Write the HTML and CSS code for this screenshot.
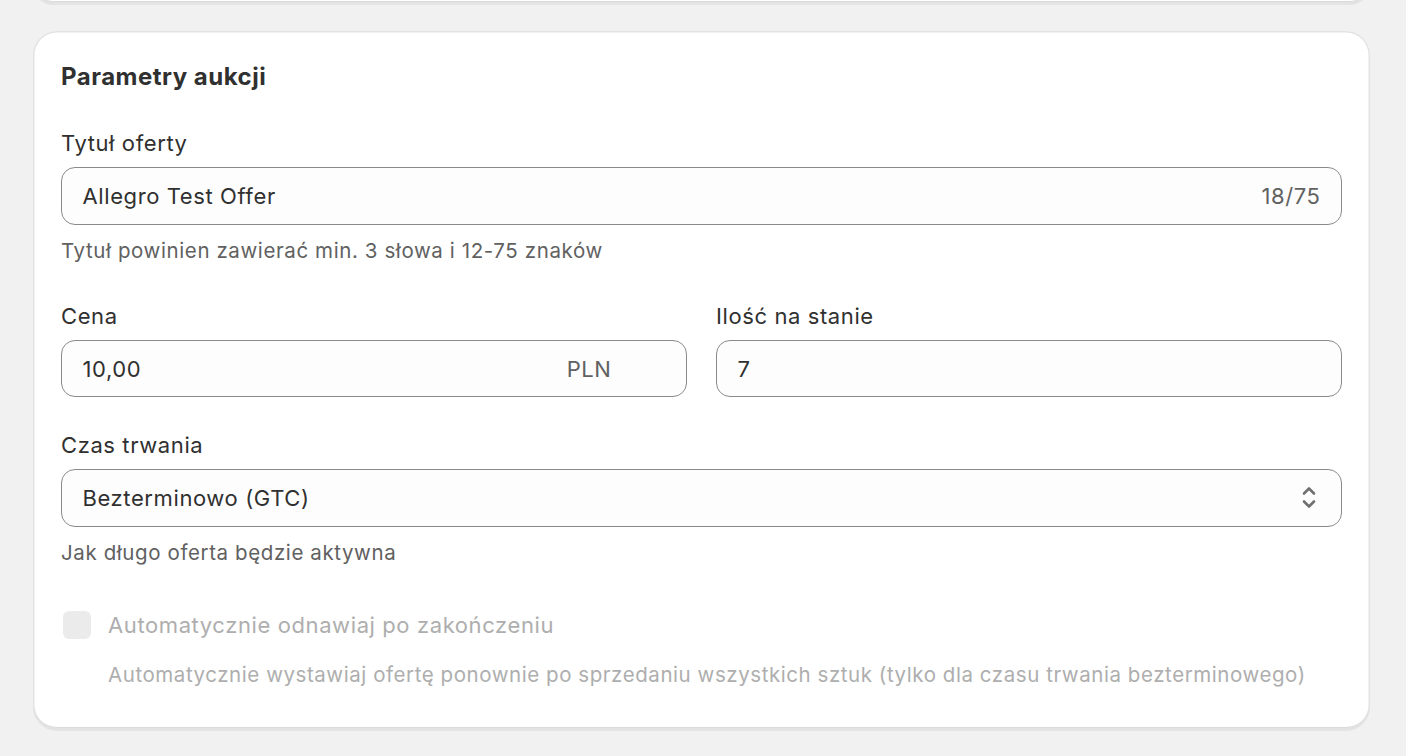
FILE: index.html
```html
<!DOCTYPE html>
<html lang="pl">
<head>
<meta charset="utf-8">
<title>Parametry aukcji</title>
<link rel="stylesheet" href="styles.css">
</head>
<body>
<div class="page">
  <div class="card card-prev"></div>
  <section class="card">
    <h2 class="card-title">Parametry aukcji</h2>

    <div class="field field-first">
      <label class="label">Tytuł oferty</label>
      <div class="input">
        <span class="value">Allegro Test Offer</span>
        <span class="counter">18/75</span>
      </div>
      <p class="help">Tytuł powinien zawierać min. 3 słowa i 12-75 znaków</p>
    </div>

    <div class="row">
      <div class="field">
        <label class="label">Cena</label>
        <div class="input">
          <span class="value">10,00</span>
          <span class="suffix">PLN</span>
        </div>
      </div>
      <div class="field">
        <label class="label">Ilość na stanie</label>
        <div class="input">
          <span class="value">7</span>
        </div>
      </div>
    </div>

    <div class="field field-select">
      <label class="label">Czas trwania</label>
      <div class="input select">
        <span class="value">Bezterminowo (GTC)</span>
        <svg class="select-icon" width="16" height="24" viewBox="0 0 16 24" aria-hidden="true">
          <path d="M3 7.5 L8 2.5 L13 7.5" fill="none" stroke="#707070" stroke-width="2.6" stroke-linecap="round" stroke-linejoin="round"/>
          <path d="M3 15.5 L8 20.5 L13 15.5" fill="none" stroke="#707070" stroke-width="2.6" stroke-linecap="round" stroke-linejoin="round"/>
        </svg>
      </div>
      <p class="help">Jak długo oferta będzie aktywna</p>
    </div>

    <div class="check">
      <span class="checkbox"></span>
      <span class="check-label">Automatycznie odnawiaj po zakończeniu</span>
    </div>
    <p class="check-help">Automatycznie wystawiaj ofertę ponownie po sprzedaniu wszystkich sztuk (tylko dla czasu trwania bezterminowego)</p>
  </section>
</div>
</body>
</html>
```

FILE: styles.css
```css
* { box-sizing: border-box; }

html, body {
  margin: 0;
  padding: 0;
  background: #f1f1f1;
  font-family: Inter, "Noto Sans", "Liberation Sans", sans-serif;
  color: #303030;
  letter-spacing: 0.6px;
}

.page {
  width: 1406px;
  height: 756px;
  overflow: hidden;
  padding: 0 36px 0 33px;
}

.card {
  background: #ffffff;
  border-radius: 24px;
  box-shadow:
    inset 0 0 0 1.5px #e3e3e3,
    inset 0 -2px 0 0 #d0d0d0,
    0 2px 0 0 rgba(26, 26, 26, 0.06);
  padding: 29px 28px 39px 28px;
}

.card-prev {
  height: 40px;
  margin-top: -37px;
  margin-bottom: 28px;
  padding: 0;
}

.card-title {
  margin: 0;
  font-size: 24px;
  line-height: 34px;
  font-weight: 650;
  letter-spacing: 0.5px;
  color: #303030;
}

.field { display: flex; flex-direction: column; }
.field-first { margin-top: 34px; }

.label {
  font-size: 22px;
  line-height: 30px;
  color: #303030;
  margin-bottom: 9px;
}

.input {
  height: 58px;
  border: 1.5px solid #8a8a8a;
  border-radius: 14px;
  background: #fdfdfd;
  display: flex;
  align-items: center;
  padding: 0 20.5px;
  font-size: 22px;
  color: #303030;
}

.value { flex: 1; }

.counter { color: #616161; }

.suffix {
  color: #616161;
  margin-right: 54px;
}

.help {
  margin: 11px 0 0;
  font-size: 20.5px;
  line-height: 30px;
  color: #616161;
}

.row {
  display: grid;
  grid-template-columns: 1fr 1fr;
  column-gap: 29px;
  margin-top: 35px;
}

.row .input { height: 57px; }

.field-select { margin-top: 33px; }

.select { padding-right: 24px; }

.select-icon { display: block; }

.check {
  display: flex;
  align-items: center;
  margin-top: 42px;
  padding-left: 2px;
}

.checkbox {
  width: 28px;
  height: 28px;
  border-radius: 6px;
  background: #ebebeb;
  margin-right: 17px;
  flex: none;
}

.check-label {
  font-size: 22px;
  line-height: 30px;
  color: #aeaeae;
}

.check-help {
  margin: 20px 0 0 47px;
  font-size: 20.5px;
  line-height: 30px;
  letter-spacing: 0.56px;
  color: #aeaeae;
}
```
